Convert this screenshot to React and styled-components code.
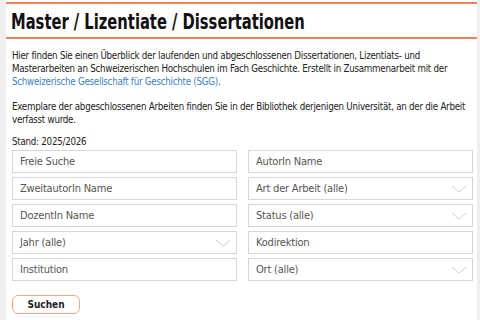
import React from 'react';
import styled, { createGlobalStyle } from 'styled-components';

const GlobalStyle = createGlobalStyle`
  html, body {
    margin: 0;
    padding: 0;
    background: #efefef;
  }
  body {
    font-family: "DejaVu Sans Condensed", "Liberation Sans", sans-serif;
    color: #222;
  }
`;

const Page = styled.div`
  margin: 0 3px 0 6px;
  background: #fff;
  min-height: 320px;
  padding-top: 2px;
`;

const TitleBar = styled.header`
  border-top: 2px solid #ef7f5d;
  border-bottom: 2px solid #ef7f5d;
  padding: 6px 5px 3px;
`;

const Title = styled.h1`
  display: inline-block;
  margin: 0;
  font-size: 21px;
  line-height: 24px;
  font-weight: 700;
  color: #111;
  transform: scaleX(0.78);
  transform-origin: left center;
  white-space: nowrap;
`;

const Body = styled.main`
  padding: 10px 5px 0 6px;
`;

const Text = styled.p`
  margin: 0 0 ${p => p.$gap ?? 12}px;
  font-size: 9.7px;
  line-height: 13px;
  letter-spacing: -0.25px;
  white-space: nowrap;
  color: #222;
`;

const Link = styled.a`
  color: #3b7fc4;
  text-decoration: none;
`;

const Grid = styled.form`
  display: grid;
  grid-template-columns: 225px 225px;
  column-gap: 11px;
  row-gap: 4px;
`;

const Field = styled.div`
  position: relative;
  height: 23px;
  border: 1px solid #d6d6d6;
  box-sizing: border-box;
  display: flex;
  align-items: center;
  padding: 0 7px;
  font-size: 11px;
  letter-spacing: -0.2px;
  color: #555;
`;

const Chevron = styled.svg`
  position: absolute;
  right: 5px;
  top: 6px;
  width: 16px;
  height: 10px;
`;

const Button = styled.button`
  margin-top: 14px;
  width: 68px;
  height: 19px;
  border: 1px solid #f2a587;
  border-radius: 6px;
  background: #fff;
  font-family: inherit;
  font-size: 10px;
  font-weight: 700;
  color: #222;
  padding: 0;
`;

const fields = [
  ['Freie Suche', false],
  ['AutorIn Name', false],
  ['ZweitautorIn Name', false],
  ['Art der Arbeit (alle)', true],
  ['DozentIn Name', false],
  ['Status (alle)', true],
  ['Jahr (alle)', true],
  ['Kodirektion', false],
  ['Institution', false],
  ['Ort (alle)', true],
];

const Select = ({ label }) => (
  <Field>
    {label}
    <Chevron viewBox="0 0 16 10">
      <path d="M1 2 L8 8 L15 2" fill="none" stroke="#cfcfcf" strokeWidth="1" />
    </Chevron>
  </Field>
);

export default function App() {
  return (
    <Page>
      <GlobalStyle />
      <TitleBar>
        <Title>Master / Lizentiate / Dissertationen</Title>
      </TitleBar>
      <Body>
        <Text>
          Hier finden Sie einen Überblick der laufenden und abgeschlossenen Dissertationen, Lizentiats- und
          <br />
          Masterarbeiten an Schweizerischen Hochschulen im Fach Geschichte. Erstellt in Zusammenarbeit mit der
          <br />
          <Link href="#">Schweizerische Gesellschaft für Geschichte (SGG)</Link>.
        </Text>
        <Text $gap={9}>
          Exemplare der abgeschlossenen Arbeiten finden Sie in der Bibliothek derjenigen Universität, an der die Arbeit
          <br />
          verfasst wurde.
        </Text>
        <Text $gap={2}>Stand: 2025/2026</Text>
        <Grid>
          {fields.map(([label, select]) =>
            select ? <Select key={label} label={label} /> : <Field key={label}>{label}</Field>
          )}
        </Grid>
        <Button type="button">Suchen</Button>
      </Body>
    </Page>
  );
}
